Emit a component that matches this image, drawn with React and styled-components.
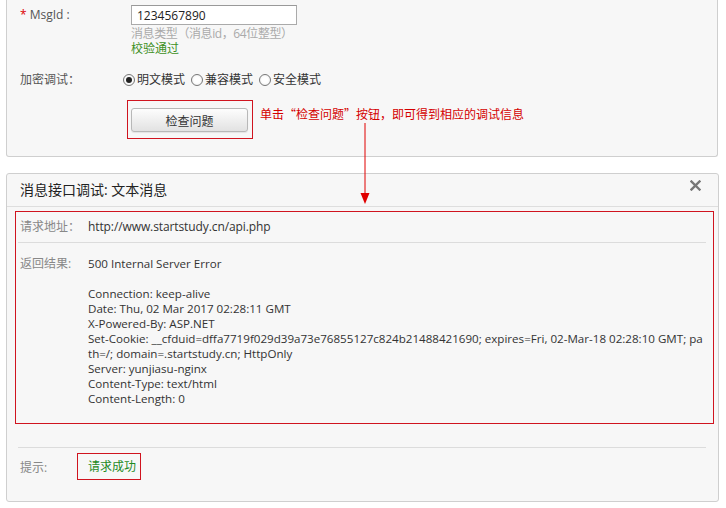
import React from 'react'
import styled, { createGlobalStyle } from 'styled-components'

const GlobalStyle = createGlobalStyle`
  html, body {
    margin: 0;
    padding: 0;
    background: #fff;
  }
  body {
    font-family: 'Open Sans', 'Noto Sans CJK SC', sans-serif;
    font-size: 12px;
    color: #333;
  }
`

const headerLines = [
  '500 Internal Server Error',
  '',
  'Connection: keep-alive',
  'Date: Thu, 02 Mar 2017 02:28:11 GMT',
  'X-Powered-By: ASP.NET',
  'Set-Cookie: __cfduid=dffa7719f029d39a73e76855127c824b21488421690; expires=Fri, 02-Mar-18 02:28:10 GMT; pa',
  'th=/; domain=.startstudy.cn; HttpOnly',
  'Server: yunjiasu-nginx',
  'Content-Type: text/html',
  'Content-Length: 0',
]

const modes = [
  { label: '明文模式', checked: true },
  { label: '兼容模式', checked: false },
  { label: '安全模式', checked: false },
]

const Radio = ({ checked, label }) => (
  <Styles.RadioItem>
    <Styles.RadioDot checked={checked} />
    <span>{label}</span>
  </Styles.RadioItem>
)

export default function App() {
  return (
    <Styles.Page>
      <GlobalStyle />
      <Styles.FormPanel>
        <Styles.FormRow>
          <Styles.FormLabel>
            <Styles.Star>*</Styles.Star> MsgId :
          </Styles.FormLabel>
          <Styles.FormField>
            <Styles.Input defaultValue="1234567890" />
            <Styles.Hint>消息类型（消息id，64位整型）</Styles.Hint>
            <Styles.Valid>校验通过</Styles.Valid>
          </Styles.FormField>
        </Styles.FormRow>
        <Styles.FormRow gap={14}>
          <Styles.FormLabel>加密调试：</Styles.FormLabel>
          <Styles.RadioGroup>
            {modes.map((m) => (
              <Radio key={m.label} {...m} />
            ))}
          </Styles.RadioGroup>
        </Styles.FormRow>
        <Styles.FormRow gap={10}>
          <Styles.FormLabel />
          <Styles.ButtonRow>
            <Styles.MarkBox>
              <Styles.Button>检查问题</Styles.Button>
            </Styles.MarkBox>
            <Styles.Note>单击“检查问题”按钮，即可得到相应的调试信息</Styles.Note>
          </Styles.ButtonRow>
        </Styles.FormRow>
      </Styles.FormPanel>

      <Styles.Arrow width="12" height="82" viewBox="0 0 12 82">
        <line x1="6" y1="0" x2="6" y2="72" stroke="#e00000" strokeWidth="1" />
        <polygon points="1.5,70 10.5,70 6,81" fill="#e00000" />
      </Styles.Arrow>

      <Styles.ResultPanel>
        <Styles.ResultHeader>
          <span>消息接口调试: 文本消息</span>
          <Styles.Close>
            <svg width="11" height="11" viewBox="0 0 11 11">
              <path d="M1.5 1.5 L9.5 9.5 M9.5 1.5 L1.5 9.5" stroke="#777" strokeWidth="2.4" strokeLinecap="square" />
            </svg>
          </Styles.Close>
        </Styles.ResultHeader>
        <Styles.ResultBody>
          <Styles.ResultBox>
            <Styles.InfoRow>
              <Styles.InfoLabel>请求地址：</Styles.InfoLabel>
              <Styles.InfoValue>http://www.startstudy.cn/api.php</Styles.InfoValue>
            </Styles.InfoRow>
            <Styles.InfoRow last>
              <Styles.InfoLabel>返回结果:</Styles.InfoLabel>
              <Styles.Pre>
                {headerLines.map((l, i) => (
                  <Styles.PreLine key={i}>{l || '\u00a0'}</Styles.PreLine>
                ))}
              </Styles.Pre>
            </Styles.InfoRow>
          </Styles.ResultBox>
          <Styles.Divider />
          <Styles.TipRow>
            <Styles.InfoLabel>提示:</Styles.InfoLabel>
            <Styles.TipBox>请求成功</Styles.TipBox>
          </Styles.TipRow>
        </Styles.ResultBody>
      </Styles.ResultPanel>
    </Styles.Page>
  )
}

const markRed = '#d0141f'

const Styles = {
  Page: styled.div`
    position: relative;
    width: 726px;
    padding-bottom: 4px;
  `,
  FormPanel: styled.section`
    margin: 0 8px 0 6px;
    background: #f7f7f7;
    border: 1px solid #cfcfcf;
    border-top: 0;
    border-radius: 0 0 3px 3px;
    padding: 5px 0 17px 13px;
  `,
  FormRow: styled.div`
    display: flex;
    margin-top: ${(p) => p.gap || 0}px;
  `,
  FormLabel: styled.div`
    width: 111px;
    flex-shrink: 0;
    line-height: 19px;
    color: #555;
  `,
  Star: styled.span`
    color: #d00;
  `,
  FormField: styled.div`
    display: flex;
    flex-direction: column;
  `,
  Input: styled.input`
    box-sizing: border-box;
    width: 166px;
    height: 20px;
    margin: 0;
    padding: 0 5px;
    border: 1px solid #aaa;
    border-top-color: #999;
    background: #fff;
    font: 12px 'Open Sans', 'Noto Sans CJK SC', sans-serif;
    color: #222;
    outline: none;
  `,
  Hint: styled.div`
    line-height: 16px;
    margin-top: 1px;
    color: #aaa;
    letter-spacing: -0.4px;
  `,
  Valid: styled.div`
    line-height: 14px;
    color: #3c8f23;
  `,
  RadioGroup: styled.div`
    display: flex;
    align-items: center;
    gap: 6px;
    margin-left: -8px;
    line-height: 20px;
    color: #333;
  `,
  RadioItem: styled.label`
    display: flex;
    align-items: center;
    gap: 2px;
  `,
  RadioDot: styled.span`
    box-sizing: border-box;
    width: 12px;
    height: 12px;
    border-radius: 50%;
    border: 1px solid #777;
    background: radial-gradient(circle, #fff 40%, #e8e8e8 100%);
    display: flex;
    align-items: center;
    justify-content: center;
    &::after {
      content: '';
      width: 6px;
      height: 6px;
      border-radius: 50%;
      background: ${(p) => (p.checked ? '#222' : 'transparent')};
    }
  `,
  ButtonRow: styled.div`
    display: flex;
    align-items: flex-start;
    margin-left: -4px;
  `,
  MarkBox: styled.div`
    border: 1px solid ${markRed};
    padding: 7px 4px 6px 3px;
  `,
  Button: styled.button`
    box-sizing: border-box;
    width: 117px;
    height: 24px;
    margin: 0;
    border: 1px solid #b8b8b8;
    border-radius: 3px;
    background: linear-gradient(#fdfdfd, #e2e2e2);
    box-shadow: 0 1px 1px rgba(0, 0, 0, 0.08);
    font: 12px 'Noto Sans CJK SC', sans-serif;
    color: #333;
  `,
  Note: styled.div`
    margin: 6px 0 0 7px;
    line-height: 16px;
    color: #d40000;
    font-family: 'Noto Sans CJK SC', sans-serif;
  `,
  Arrow: styled.svg`
    position: absolute;
    left: 359px;
    top: 123px;
  `,
  ResultPanel: styled.section`
    margin: 16px 7px 0 6px;
    background: #f7f7f7;
    border: 1px solid #cfcfcf;
    border-radius: 3px;
  `,
  ResultHeader: styled.header`
    display: flex;
    justify-content: space-between;
    align-items: flex-start;
    height: 32px;
    padding: 0 17px 0 13px;
    border-bottom: 1px solid #dedede;
    font-size: 14px;
    line-height: 32px;
    color: #222;
  `,
  Close: styled.span`
    display: flex;
    padding-top: 6px;
  `,
  ResultBody: styled.div`
    padding: 4px 4px 21px 8px;
  `,
  ResultBox: styled.div`
    border: 1px solid ${markRed};
    padding: 0 7px 0 2px;
  `,
  InfoRow: styled.div`
    display: flex;
    padding: ${(p) => (p.last ? '13px 0 17px 2px' : '0 0 0 2px')};
    line-height: ${(p) => (p.last ? '15px' : '30px')};
    border-bottom: ${(p) => (p.last ? '0' : '1px solid #dcdcdc')};
  `,
  InfoLabel: styled.div`
    width: 68px;
    flex-shrink: 0;
    color: #888;
  `,
  InfoValue: styled.div`
    color: #333;
    letter-spacing: -0.1px;
  `,
  Pre: styled.div`
    color: #333;
    font-size: 11.6px;
  `,
  PreLine: styled.div`
    height: 15px;
    line-height: 15px;
    white-space: nowrap;
  `,
  Divider: styled.div`
    height: 1px;
    margin: 23px 8px 0 3px;
    background: #dcdcdc;
  `,
  TipRow: styled.div`
    display: flex;
    align-items: center;
    margin-top: 5px;
    padding-left: 5px;
  `,
  TipBox: styled.div`
    box-sizing: border-box;
    width: 64px;
    height: 27px;
    margin-left: -11px;
    border: 1px solid ${markRed};
    padding-left: 10px;
    line-height: 25px;
    color: #1f8a1f;
  `,
}
